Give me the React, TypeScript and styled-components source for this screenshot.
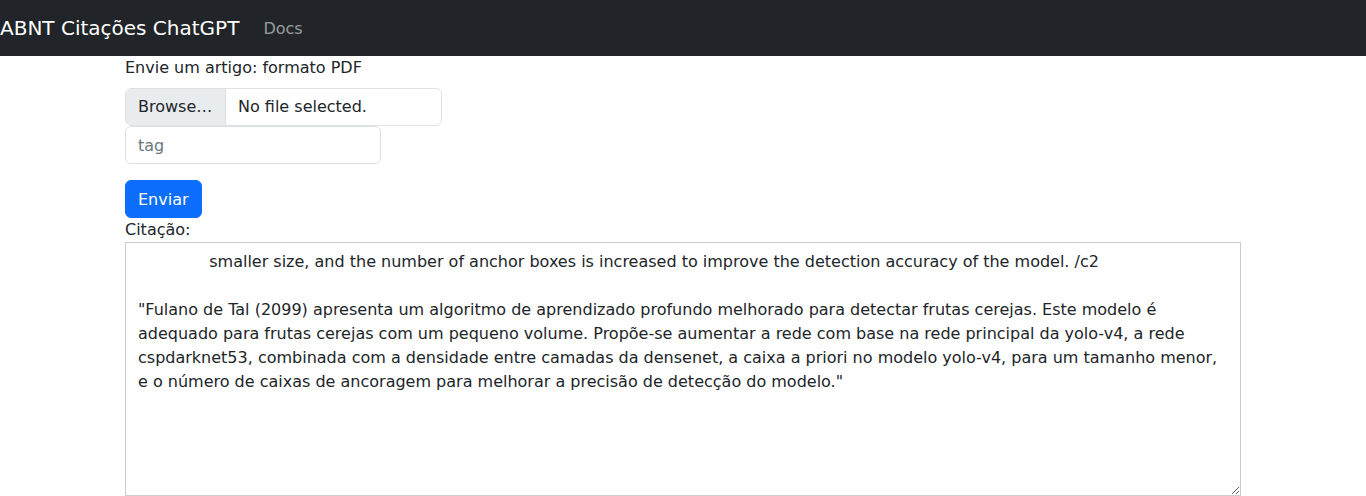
import React from "react";
import styled, { createGlobalStyle } from "styled-components";

const Global = createGlobalStyle`
  *, *::before, *::after { box-sizing: border-box; }
  html, body { margin: 0; padding: 0; background: #fff; }
  body {
    font-family: "DejaVu Sans", sans-serif;
    font-size: 16px;
    line-height: 1.5;
    color: #212529;
    overflow: hidden;
  }
`;

const Navbar = styled.nav`
  height: 56px;
  background: #212529;
  display: flex;
  align-items: center;
  padding: 8px 0;
`;

const Brand = styled.a`
  font-size: 20px;
  line-height: 30px;
  color: #fff;
  text-decoration: none;
  margin-right: 16px;
  white-space: nowrap;
`;

const NavLink = styled.a`
  color: rgba(255, 255, 255, 0.55);
  text-decoration: none;
  padding: 9px 8px 7px;
  line-height: 24px;
`;

const Container = styled.main`
  width: 1140px;
  margin: 0 auto;
  padding: 0 12px;
  display: flex;
  flex-direction: column;
  align-items: flex-start;
`;

const Label = styled.label<{ $mb?: number }>`
  display: block;
  line-height: 24px;
  margin-bottom: ${(p) => p.$mb ?? 0}px;
`;

const FileBox = styled.div`
  display: flex;
  width: 317px;
  height: 38px;
  border: 1px solid #dee2e6;
  border-radius: 6px;
  overflow: hidden;
  background: #fff;
`;

const FileButton = styled.span`
  display: flex;
  align-items: center;
  padding: 0 12px;
  background: #e9ecef;
  border-right: 1px solid #dee2e6;
  width: 100px;
  white-space: nowrap;
`;

const FileName = styled.span`
  display: flex;
  align-items: center;
  padding-left: 12px;
`;

const TextInput = styled.input`
  width: 256px;
  height: 38px;
  padding: 6px 12px;
  border: 1px solid #dee2e6;
  border-radius: 6px;
  font: inherit;
  color: #212529;
  &::placeholder { color: #6c757d; opacity: 1; }
`;

const Button = styled.button`
  margin-top: 16px;
  height: 38px;
  padding: 7px 12px 5px;
  border: 1px solid #0d6efd;
  border-radius: 6px;
  background: #0d6efd;
  color: #fff;
  font: inherit;
  line-height: 24px;
`;

const Output = styled.textarea`
  width: 1116px;
  height: 254px;
  padding: 7px 12px 5px;
  border: 1px solid #cccccc;
  border-radius: 0;
  font: inherit;
  line-height: 24px;
  color: #212529;
  resize: both;
  white-space: pre-wrap;
  outline: none;
`;

const text =
  "              smaller size, and the number of anchor boxes is increased to improve the detection accuracy of the model. /c2\n\n" +
  "\"Fulano de Tal (2099) apresenta um algoritmo de aprendizado profundo melhorado para detectar frutas cerejas. Este modelo é\n" +
  "adequado para frutas cerejas com um pequeno volume. Propõe-se aumentar a rede com base na rede principal da yolo-v4, a rede\n" +
  "cspdarknet53, combinada com a densidade entre camadas da densenet, a caixa a priori no modelo yolo-v4, para um tamanho menor,\n" +
  "e o número de caixas de ancoragem para melhorar a precisão de detecção do modelo.\"";

export default function App() {
  return (
    <>
      <Global />
      <Navbar>
        <Brand href="#">ABNT Citações ChatGPT</Brand>
        <NavLink href="#">Docs</NavLink>
      </Navbar>
      <Container>
        <Label $mb={8}>Envie um artigo: formato PDF</Label>
        <FileBox>
          <FileButton>Browse…</FileButton>
          <FileName>No file selected.</FileName>
        </FileBox>
        <TextInput placeholder="tag" />
        <Button>Enviar</Button>
        <Label>Citação:</Label>
        <Output value={text} readOnly />
      </Container>
    </>
  );
}
